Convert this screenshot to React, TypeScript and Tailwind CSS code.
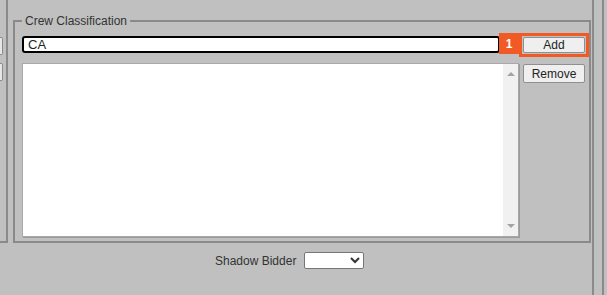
import React from 'react'

const font = { fontFamily: '"Liberation Sans", Arial, sans-serif' }

export default function App() {
  return (
    <div className="w-[607px] h-[295px] bg-[#c0c0c0] flex overflow-hidden text-[#333]" style={font}>
      {/* main column */}
      <div className="flex flex-col w-[592px]">
        <div className="flex h-[243px]">
          {/* left rail (cut-off panel) */}
          <div className="w-[8px] h-[243px] border-r-2 border-b-2 border-[#8a8a8a] flex flex-col">
            <div className="mt-[37px] w-[3px] h-[18px] bg-[#e6e6e6] border-y border-r border-[#8a8a8a] rounded-r-[2px]" />
            <div className="mt-[8px] w-[3px] h-[18px] bg-[#e6e6e6] border-y border-r border-[#8a8a8a] rounded-r-[2px]" />
          </div>

          {/* Crew Classification */}
          <fieldset className="ml-[5px] mt-[14px] w-[578px] h-[229px] border-2 border-[#8a8a8a] pl-[7px] pr-[4px] pb-[4px]">
            <legend className="px-[3px] text-[12px] leading-[14px] text-[#333]">Crew Classification</legend>
            <div className="flex items-start mt-[8px]">
              <input
                defaultValue="CA"
                className="w-[478px] h-[17px] bg-white border-2 border-black rounded-[3px] px-[4px] text-[13px] leading-[13px] text-[#222] outline-none"
                style={font}
              />
              <div className="relative flex ml-[23px] mt-[1px]">
                <div className="absolute -left-[4px] -top-[4px] -right-[4px] -bottom-[4px] border-[3px] border-[#f15a24]" />
                <div className="absolute left-[-24px] top-[-4px] w-[20px] h-[21px] bg-[#f15a24] text-white text-[12px] font-bold flex items-center justify-center">
                  1
                </div>
                <button
                  className="w-[62px] h-[16px] bg-[#efefef] border border-[#8f8f8f] rounded-[2px] text-[12px] leading-[12px] text-[#222]"
                  style={font}
                >
                  Add
                </button>
              </div>
            </div>

            <div className="flex items-start mt-[10px]">
              <div className="w-[497px] h-[174px] bg-white border border-[#a8a8a8] shadow-[1px_1px_0_#9a9a9a] flex justify-end">
                <div className="w-[15px] h-full bg-[#f1f1f1] flex flex-col items-center justify-between py-[7px]">
                  <svg width="8" height="5" viewBox="0 0 8 5">
                    <path d="M0 5 L4 1 L8 5 Z" fill="#a3a3a3" />
                  </svg>
                  <svg width="8" height="5" viewBox="0 0 8 5">
                    <path d="M0 0 L8 0 L4 4 Z" fill="#a3a3a3" />
                  </svg>
                </div>
              </div>
              <button
                className="ml-[4px] mt-[1px] w-[62px] h-[19px] bg-[#efefef] border border-[#8f8f8f] rounded-[2px] text-[12px] leading-[12px] text-[#222]"
                style={font}
              >
                Remove
              </button>
            </div>
          </fieldset>
        </div>

        {/* bottom row */}
        <div className="flex items-center pl-[215px] pt-[9px]">
          <span className="text-[12px] leading-[14px] text-[#333]">Shadow Bidder</span>
          <select
            className="ml-[8px] w-[60px] h-[17px] bg-white border border-[#767676] rounded-[2px] text-[12px]"
            style={font}
          >
            <option value=""></option>
          </select>
        </div>
      </div>

      {/* right rail */}
      <div className="w-[12px] h-full border-l-2 border-r-2 border-[#8a8a8a]" />
    </div>
  )
}
